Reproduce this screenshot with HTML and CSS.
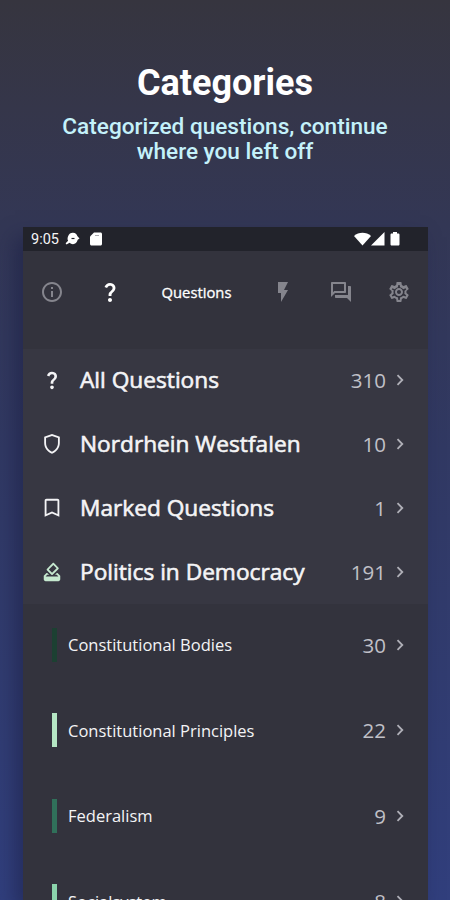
FILE: index.html
```html
<!DOCTYPE html>
<html lang="en">
<head>
    <meta charset="UTF-8">
    <meta name="viewport" content="width=device-width, initial-scale=1.0">
    <title>Categories</title>
    <link rel="stylesheet" href="styles.css">
</head>
<body>
    <header class="hero">
        <h1>Categories</h1>
        <p>Categorized questions, continue<br>where you left off</p>
    </header>

    <main class="phone">
        <!-- Status bar -->
        <div class="status-bar">
            <span class="clock">9:05</span>
            <svg class="status-bird" width="15" height="14" viewBox="0 0 15 14"><path fill="#fff" d="M3 4.5C4 1.500 6 .7 8 .8c2.500 0 3.800 1.400 4.300 3.200l2.200 2.500-1.800 1.300c-.6 2.800-2.500 4.400-4.700 4.400-1.500 0-2.600-.5-3.400-1.400L1.500 12.600.6 11.200l2.500-2.500C2.300 7.500 2.500 6 3 4.500z"/><path stroke="#202129" stroke-width="1.200" d="M6.500 6.500h3"/></svg>
            <svg width="12" height="14" viewBox="0 0 12 14"><path fill="#fff" d="M4 .5h6.500c.8 0 1.500.6 1.500 1.500v10c0 .9-.7 1.500-1.500 1.500h-9C.7 13.500 0 12.900 0 12V4.500z"/><path stroke="#aaaab0" d="M5 3.500h4"/></svg>
            <span class="status-right">
                <svg width="17" height="14" viewBox="0 0 17 14"><path fill="#fff" d="M0 4C4.500-.3 12.500-.3 17 4l-8.500 9.500z"/></svg>
                <svg width="14" height="14" viewBox="0 0 14 14"><path fill="#fff" d="M13.500 0v13.500H0z"/></svg>
                <svg class="battery" width="10" height="14" viewBox="0 0 10 14"><path fill="#fff" d="M3 0h4v1.500h1.200c.8 0 1.300.5 1.300 1.300v9.400c0 .8-.5 1.300-1.300 1.300H1.800c-.8 0-1.300-.5-1.300-1.300V2.800c0-.8.5-1.300 1.300-1.300H3z"/></svg>
            </span>
        </div>

        <!-- Tabs -->
        <nav class="tabs">
            <a class="tab"><svg class="icon" viewBox="0 0 24 24"><path d="M11 7h2v2h-2zm0 4h2v6h-2zm1-9C6.480 2 2 6.480 2 12s4.480 10 10 10 10-4.480 10-10S17.520 2 12 2zm0 18c-4.410 0-8-3.590-8-8s3.590-8 8-8 8 3.590 8 8-3.590 8-8 8z"/></svg></a>
            <a class="tab active"><svg class="icon" viewBox="0 0 24 24"><path d="M11.070 12.850c.77-1.390 2.250-2.210 3.110-3.440.91-1.290.4-3.700-2.180-3.700-1.690 0-2.520 1.280-2.870 2.340L6.540 6.960C7.250 4.830 9.180 3 11.990 3c2.350 0 3.960 1.070 4.780 2.410.7 1.150 1.110 3.300.03 4.900-1.200 1.770-2.350 2.310-2.970 3.450-.25.46-.35.76-.35 2.240h-2.890c-.01-.78-.13-2.050.48-3.150zM14 20c0 1.100-.9 2-2 2s-2-.9-2-2 .9-2 2-2 2 .9 2 2z"/></svg></a>
            <a class="tab tab-label active">Questions</a>
            <a class="tab"><svg class="icon" viewBox="0 0 24 24"><path d="M7 2v11h3v9l7-12h-4l4-8z"/></svg></a>
            <a class="tab"><svg class="icon" viewBox="0 0 24 24"><path d="M15 4v7H5.170L4 12.170V4h11m1-2H3c-.55 0-1 .45-1 1v14l4-4h10c.55 0 1-.45 1-1V3c0-.55-.45-1-1-1zm5 4h-2v9H6v2c0 .55.45 1 1 1h11l4 4V7c0-.55-.45-1-1-1z"/></svg></a>
            <a class="tab"><svg class="icon" viewBox="0 0 24 24"><path d="M19.430 12.980c.04-.32.07-.64.07-.98s-.03-.66-.07-.98l2.110-1.650c.19-.15.24-.42.12-.64l-2-3.460c-.12-.22-.39-.3-.61-.22l-2.490 1c-.52-.4-1.080-.73-1.690-.98l-.38-2.650C14.460 2.180 14.250 2 14 2h-4c-.25 0-.46.18-.49.42l-.38 2.650c-.61.25-1.170.59-1.690.98l-2.490-1c-.23-.09-.49 0-.61.22l-2 3.460c-.13.22-.07.49.12.64l2.110 1.650c-.04.32-.07.65-.07.98s.03.66.07.98l-2.110 1.650c-.19.15-.24.42-.12.64l2 3.460c.12.22.39.3.61.22l2.490-1c.52.4 1.080.73 1.690.98l.38 2.650c.03.24.24.42.49.42h4c.25 0 .46-.18.49-.42l.38-2.650c.61-.25 1.170-.59 1.690-.98l2.490 1c.23.09.49 0 .61-.22l2-3.460c.12-.22.07-.49-.12-.64zm-1.980-1.710c.04.31.05.52.05.73s-.02.43-.05.73l-.14 1.130.89.7 1.080.84-.7 1.210-1.270-.51-1.040-.42-.9.68c-.43.32-.84.56-1.250.73l-1.060.43-.16 1.130-.2 1.350h-1.400l-.35-2.480-1.060-.43c-.43-.18-.83-.41-1.230-.71l-.91-.7-1.060.43-1.270.51-.7-1.210 1.970-1.540-.14-1.130c-.03-.31-.05-.54-.05-.74s.02-.43.05-.73l.14-1.130L4.720 9.480l.7-1.210 2.310.94.9-.68c.43-.32.84-.56 1.250-.73l1.060-.43.36-2.480h1.390l.35 2.480 1.060.43c.43.18.83.41 1.230.71l.91.7 2.330-.94.7 1.210-1.960 1.540zM12 8c-2.210 0-4 1.790-4 4s1.790 4 4 4 4-1.790 4-4-1.790-4-4-4zm0 6c-1.100 0-2-.9-2-2s.9-2 2-2 2 .9 2 2-.9 2-2 2z"/></svg></a>
        </nav>

        <!-- Categories -->
        <section class="categories">
            <div class="row">
                <svg class="icon" viewBox="0 0 24 24"><path d="M11.070 12.850c.77-1.390 2.250-2.210 3.110-3.440.91-1.290.4-3.700-2.180-3.700-1.690 0-2.520 1.280-2.870 2.340L6.540 6.960C7.250 4.830 9.180 3 11.990 3c2.350 0 3.960 1.070 4.780 2.410.7 1.150 1.110 3.300.03 4.900-1.200 1.770-2.350 2.310-2.970 3.450-.25.46-.35.76-.35 2.240h-2.890c-.01-.78-.13-2.050.48-3.150zM14 20c0 1.100-.9 2-2 2s-2-.9-2-2 .9-2 2-2 2 .9 2 2z"/></svg>
                <span class="name">All Questions</span>
                <span class="count">310</span>
                <svg class="chevron" viewBox="0 0 8 12"><path d="M1.500 1.200 6.300 6l-4.800 4.800"/></svg>
            </div>
            <div class="row">
                <svg class="icon" viewBox="0 0 24 24"><path d="M12 1 3.500 4v7c0 5.300 3.400 9.700 8.500 11.700 5.100-2 8.500-6.400 8.500-11.700V4zm6.500 10c0 4.200-2.600 7.700-6.500 9.500-3.900-1.800-6.500-5.300-6.500-9.500V5.500L12 3.200l6.500 2.300z"/></svg>
                <span class="name">Nordrhein Westfalen</span>
                <span class="count">10</span>
                <svg class="chevron" viewBox="0 0 8 12"><path d="M1.500 1.200 6.300 6l-4.800 4.800"/></svg>
            </div>
            <div class="row">
                <svg class="icon" viewBox="0 0 24 24"><path d="M18 2H6c-1.100 0-2 .9-2 2v17.500l8-3.400 8 3.400V4c0-1.100-.9-2-2-2zm0 16.500-6-2.600-6 2.600V4h12z"/></svg>
                <span class="name">Marked Questions</span>
                <span class="count">1</span>
                <svg class="chevron" viewBox="0 0 8 12"><path d="M1.500 1.200 6.300 6l-4.800 4.800"/></svg>
            </div>
            <div class="row">
                <svg class="icon vote" viewBox="0 0 24 24"><path d="M18 13h-.68l-2 2h1.910L19 17H5l1.780-2h2.050l-2-2H6l-3 3v4c0 1.100.89 2 1.990 2H19c1.100 0 2-.89 2-2v-4l-3-3zm-1-5.050-4.950 4.950-3.540-3.540 4.950-4.950L17 7.950zm-4.240-5.660L6.390 8.660c-.39.39-.39 1.020 0 1.410l4.950 4.950c.39.39 1.020.39 1.410 0l6.360-6.360c.39-.39.39-1.020 0-1.410L14.160 2.300c-.38-.4-1.010-.4-1.400-.01z"/></svg>
                <span class="name">Politics in Democracy</span>
                <span class="count">191</span>
                <svg class="chevron" viewBox="0 0 8 12"><path d="M1.500 1.200 6.300 6l-4.800 4.800"/></svg>
            </div>
        </section>

        <!-- Subcategories -->
        <section class="subcategories">
            <div class="row">
                <i class="bar bar-dark"></i>
                <span class="name">Constitutional Bodies</span>
                <span class="count">30</span>
                <svg class="chevron" viewBox="0 0 8 12"><path d="M1.500 1.200 6.300 6l-4.800 4.800"/></svg>
            </div>
            <div class="row">
                <i class="bar bar-light"></i>
                <span class="name">Constitutional Principles</span>
                <span class="count">22</span>
                <svg class="chevron" viewBox="0 0 8 12"><path d="M1.500 1.200 6.300 6l-4.800 4.800"/></svg>
            </div>
            <div class="row">
                <i class="bar bar-medium"></i>
                <span class="name">Federalism</span>
                <span class="count">9</span>
                <svg class="chevron" viewBox="0 0 8 12"><path d="M1.500 1.200 6.300 6l-4.800 4.800"/></svg>
            </div>
            <div class="row">
                <i class="bar bar-mint"></i>
                <span class="name">Socialsystem</span>
                <span class="count">8</span>
                <svg class="chevron" viewBox="0 0 8 12"><path d="M1.500 1.200 6.300 6l-4.800 4.800"/></svg>
            </div>
        </section>
    </main>
</body>
</html>
```
FILE: styles.css
```css
* {
    box-sizing: border-box;
}
body {
    margin: 0;
    height: 900px;
    overflow: hidden;
    background: linear-gradient(180deg, #36353f 0%, #35364a 12%, #333755 25%, #313963 50%, #313f7d 100%);
    font-family: 'Open Sans', 'Noto Sans', sans-serif;
    color: #f4f4f6;
}
.hero {
    height: 227px;
    padding-top: 62px;
    text-align: center;
    font-family: Roboto, sans-serif;
}
h1 {
    margin: 0;
    font-size: 36px;
    line-height: 42px;
    font-weight: 700;
    color: #fff;
}
.hero p {
    margin: 10px 0 0;
    font-size: 22.6px;
    line-height: 25px;
    font-weight: 500;
    color: #c4f1fa;
}
.phone {
    width: 405px;
    height: 673px;
    margin-left: 23px;
    overflow: hidden;
    background: #33333d;
    box-shadow: -8px 10px 18px rgba(24, 28, 66, 0.5);
}
.status-bar {
    display: flex;
    align-items: center;
    height: 24px;
    padding: 0 28px 0 8px;
    background: #22232b;
}
.clock {
    width: 34px;
    font-family: Roboto, sans-serif;
    font-size: 14.5px;
}
.status-bird {
    margin-right: 10px;
}
.status-right {
    display: flex;
    margin-left: auto;
}
.battery {
    margin-left: 5px;
}

/* Tabs */
.tabs {
    display: flex;
    height: 98px;
    padding-bottom: 17px;
    color: #85858d;
}
.tab {
    display: flex;
    align-items: center;
    justify-content: center;
    width: 58px;
}
.tab-label {
    flex: 1;
    font-size: 14.8px;
    -webkit-text-stroke: 0.3px currentColor;
}
.tab.active {
    color: #fff;
}
.icon {
    width: 24px;
    height: 24px;
    flex: none;
    fill: currentColor;
}

/* Rows */
.row {
    display: flex;
    align-items: center;
    padding-right: 24px;
}
.name {
    flex: 1;
    white-space: nowrap;
}
.count {
    font-size: 20.5px;
    color: #c0c0c7;
}
.chevron {
    width: 8px;
    height: 12px;
    margin-left: 10px;
    fill: none;
    stroke: #b0b0b8;
    stroke-width: 1.8;
}
.categories {
    height: 255px;
    background: #373742;
}
.categories .row {
    height: 63.9px;
    padding-left: 18px;
    padding-bottom: 2px;
}
.categories .icon {
    width: 22px;
    height: 22px;
    margin-right: 17px;
}
.categories .name {
    font-size: 22.7px;
    -webkit-text-stroke: 0.6px currentColor;
}
.icon.vote {
    color: #c5e8cf;
}
.subcategories .row {
    height: 85.5px;
    padding-left: 29px;
    padding-bottom: 4px;
}
.subcategories .name {
    font-size: 16.5px;
}
.bar {
    width: 5px;
    height: 34px;
    margin-right: 11px;
}
.bar-dark {
    background: #1c4032;
}
.bar-light {
    background: #b5e6c4;
}
.bar-medium {
    background: #30705a;
}
.bar-mint {
    background: #8bd4ac;
}
```
